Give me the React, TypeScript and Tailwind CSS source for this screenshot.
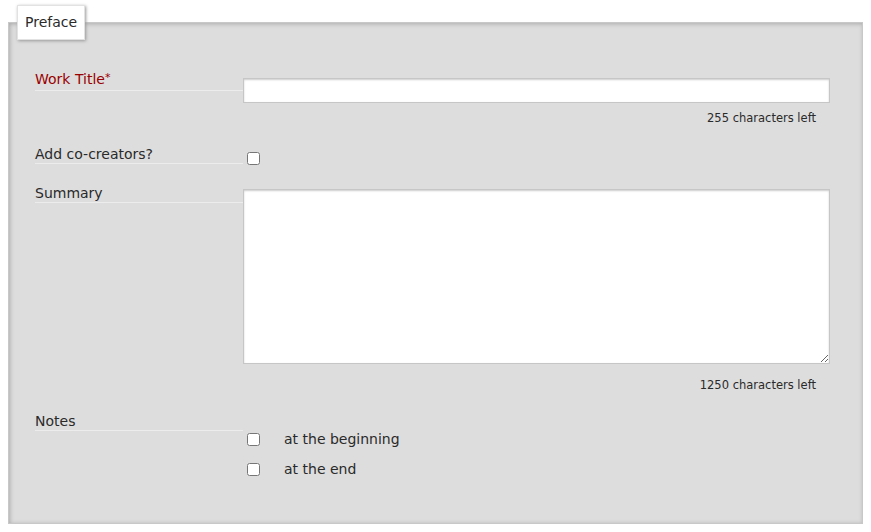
import React from "react";

const FONT = { fontFamily: '"DejaVu Sans", Verdana, sans-serif' };

function Label({ text, required = false }: { text: string; required?: boolean }) {
  return (
    <div className="w-[208px] shrink-0 border-b border-[#ececec] text-[14px] leading-[18px]">
      <span className={required ? "text-[#900]" : "text-[#2a2a2a]"}>{text}</span>
      {required && <span className="relative -top-[3px] text-[#900] text-[11px]">*</span>}
    </div>
  );
}

function Counter({ left }: { left: number }) {
  return (
    <div className="pl-[208px] pr-[14px] text-right text-[11.5px] leading-[14px] text-[#2a2a2a]">
      {left} characters left
    </div>
  );
}

export default function App() {
  return (
    <div className="min-h-[532px] bg-white px-2 pt-[5px]" style={FONT}>
      <fieldset className="w-[855px] h-[519px] border border-[#c8c8c8] bg-[#dddddd] pl-[26px] pr-[32px] shadow-[inset_1px_1px_4px_#aaa]">
        <legend className="-ml-[18px] h-[35px] bg-white border border-[#e2e2e2] px-[7px] text-[14px] leading-[33px] text-[#2a2a2a] shadow-[1px_1px_3px_#999]">
          Preface
        </legend>

        {/* Work title */}
        <div className="flex items-start mt-[30px]">
          <Label text="Work Title" required />
          <input
            type="text"
            className="mt-[8px] h-[25px] flex-1 bg-white border border-[#c6c6c6] shadow-[inset_0_1px_2px_#ccc] outline-none"
          />
        </div>
        <div className="mt-[8px]">
          <Counter left={255} />
        </div>

        {/* Co-creators */}
        <div className="flex items-start mt-[20px]">
          <Label text="Add co-creators?" />
          <input type="checkbox" className="ml-[4px] mt-[7px] w-[13px] h-[13px] m-0" />
        </div>

        {/* Summary */}
        <div className="flex items-start mt-[19px]">
          <Label text="Summary" />
          <textarea className="mt-[5px] h-[175px] flex-1 bg-white border border-[#c6c6c6] shadow-[inset_0_1px_2px_#ccc] outline-none" />
        </div>
        <div className="mt-[14px]">
          <Counter left={1250} />
        </div>

        {/* Notes */}
        <div className="flex items-start mt-[20px]">
          <Label text="Notes" />
          <div className="flex flex-col mt-[12px]">
            <label className="flex items-center h-[30px] text-[14px] text-[#2a2a2a]">
              <input type="checkbox" className="ml-[4px] w-[13px] h-[13px] m-0" />
              <span className="ml-[24px]">at the beginning</span>
            </label>
            <label className="flex items-center h-[30px] text-[14px] text-[#2a2a2a]">
              <input type="checkbox" className="ml-[4px] w-[13px] h-[13px] m-0" />
              <span className="ml-[24px]">at the end</span>
            </label>
          </div>
        </div>
      </fieldset>
    </div>
  );
}
